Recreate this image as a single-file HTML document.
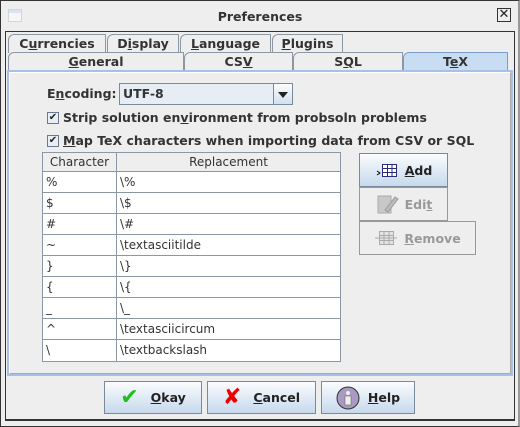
<!DOCTYPE html>
<html><head><meta charset="utf-8"><style>
*{box-sizing:border-box;margin:0;padding:0}
body{width:520px;height:427px;background:#eeeeee;font-family:"DejaVu Sans","Liberation Sans",sans-serif;font-size:12px;color:#222;position:relative;overflow:hidden}
.a{position:absolute}
.b{font-weight:bold;font-size:12.5px;color:#333}
.tab{position:absolute;border:1px solid #8c97a3;border-bottom:none;background:#eeeeee;font-weight:bold;font-size:12.5px;text-align:center;line-height:17px;color:#333;border-radius:6px 0 0 0}
u{text-decoration:underline}
.cell{position:absolute;height:21px;line-height:20px;padding-left:3px;font-size:12px;color:#333;font-family:"DejaVu Sans","Liberation Sans",sans-serif}
.btn{position:absolute;border:1px solid #7a8a99;background:linear-gradient(#fbfcfe,#c6d9ec);font-weight:bold;font-size:12.5px;display:flex;align-items:center;justify-content:center;color:#222}
</style></head><body>
<div class="a" style="left:0;top:0;width:520px;height:427px;border:1px solid #333;border-right:2px solid #999"></div>
<div class="a" style="left:8px;top:9px;width:14px;height:13px;background:linear-gradient(#dde3ea 0 3px,#f4f6f8 3px);border:1px solid #cfd6de"></div>
<div class="a b" style="left:0;top:9px;width:520px;text-align:center">Preferences</div>
<div class="a" style="left:497px;top:8px;width:14px;height:14px;border:1px solid #333;font-size:13px;line-height:11px;text-align:center">✕</div>
<div class="a" style="left:5px;top:31px;width:510px;height:390px;border:1px solid #333;border-bottom:2px solid #333"></div>
<div class="tab" style="left:8px;top:34px;width:98px;height:19px">C<u>u</u>rrencies</div>
<div class="tab" style="left:107px;top:34px;width:72px;height:19px">D<u>i</u>splay</div>
<div class="tab" style="left:180px;top:34px;width:91px;height:19px"><u>L</u>anguage</div>
<div class="tab" style="left:272px;top:34px;width:71px;height:19px"><u>P</u>lugins</div>
<div class="tab" style="left:8px;top:52px;width:176px;height:19px"><u>G</u>eneral</div>
<div class="tab" style="left:184px;top:52px;width:109px;height:19px">CS<u>V</u></div>
<div class="tab" style="left:293px;top:52px;width:110px;height:19px">S<u>Q</u>L</div>
<div class="tab" style="left:403px;top:52px;width:105px;height:20px;background:#c8ddf2;border-color:#7b9bd0">T<u>e</u>X</div>
<div class="a" style="left:7px;top:70px;width:506px;height:306px;border:2px solid #a8c0e6"></div>
<div class="a" style="left:9px;top:72px;width:502px;height:302px;border:1px solid #fff;border-right-color:#aaa;border-bottom-color:#aaa"></div>
<div class="a b" style="left:47px;top:86px">E<u>n</u>coding:</div>
<div class="a" style="left:119px;top:83px;width:174px;height:22px;border:1px solid #7a8a99;background:#e6edf5"></div>
<div class="a b" style="left:123px;top:86px">UTF-8</div>
<div class="a" style="left:273px;top:84px;width:19px;height:20px;border-left:1px solid #7a8a99;background:linear-gradient(#fbfcfe,#d2e0ee)"></div>
<div class="a" style="left:278px;top:92px;width:0;height:0;border-left:5px solid transparent;border-right:5px solid transparent;border-top:6px solid #222"></div>
<div class="a" style="left:47px;top:112px;width:12px;height:12px;border:1px solid #6a7a8a;background:#e8eef5;font-size:10px;line-height:10px;text-align:center">✔</div>
<div class="a b" style="left:63px;top:110px">Strip solution en<u>v</u>ironment from probsoln problems</div>
<div class="a" style="left:47px;top:135px;width:12px;height:12px;border:1px solid #6a7a8a;background:#e8eef5;font-size:10px;line-height:10px;text-align:center">✔</div>
<div class="a b" style="left:63px;top:133px"><u>M</u>ap TeX characters when importing data from CSV or SQL</div>
<div class="a" style="left:42px;top:152px;width:299px;height:210px;border:1px solid #8c97a3;background:#fff"></div>
<div class="a" style="left:43px;top:153px;width:297px;height:19px;background:#eeeeee;border-bottom:1px solid #8c97a3"></div>
<div class="a" style="left:43px;top:153px;width:73px;height:19px;text-align:center;line-height:18px;font-size:12px;color:#333">Character</div>
<div class="a" style="left:116px;top:153px;width:1px;height:208px;background:#8c97a3"></div>
<div class="a" style="left:117px;top:153px;width:223px;text-align:center;line-height:18px;font-size:12px;color:#333">Replacement</div>
<div id="rows"></div>
<div class="btn" style="left:359px;top:153px;width:89px;height:34px"><svg width="24" height="16" style="margin-right:6px"><path d="M2 9l3 2-3 2" stroke="#000" fill="none"/><rect x="7.5" y="2.5" width="14" height="12" fill="#fff" stroke="#2a2a80"/><path d="M7.5 6.5h14M7.5 10.5h14M12.5 2.5v12M17 2.5v12" stroke="#2a2a80"/></svg><u>A</u>dd</div>
<div class="btn" style="left:359px;top:187px;width:89px;height:34px;background:#eeeeee;border-color:#999;color:#999"><svg width="24" height="22" style="margin-right:6px"><rect x="3" y="3" width="13" height="17" fill="#c8c8c8" stroke="#aaa"/><path d="M10 17l10-13 3 2-10 13z" fill="#bbb" stroke="#999"/></svg>Edi<u>t</u></div>
<div class="btn" style="left:359px;top:221px;width:117px;height:34px;background:#eeeeee;border-color:#999;color:#999"><svg width="24" height="18" style="margin-right:6px"><rect x="5.5" y="2.5" width="14" height="13" fill="#e4e4e4" stroke="#aaa"/><path d="M5.5 6.5h14M5.5 11.5h14M10 2.5v13M15 2.5v13M1 9h22" stroke="#aaa"/></svg><u>R</u>emove</div>
<div class="btn" style="left:104px;top:381px;width:98px;height:33px"><span style="color:#1ec01e;font-size:22px;margin-right:12px">✔</span><u>O</u>kay</div>
<div class="btn" style="left:207px;top:381px;width:109px;height:33px"><span style="color:#e00;font-size:22px;font-weight:bold;margin-right:12px">✘</span><u>C</u>ancel</div>
<div class="btn" style="left:321px;top:381px;width:94px;height:33px"><svg width="24" height="24" style="margin-right:8px"><circle cx="12" cy="12" r="11" fill="#a89ac0" stroke="#333"/><circle cx="12" cy="7" r="2" fill="#eee"/><rect x="9" y="10" width="6" height="9" fill="#eee" stroke="#555" stroke-width=".5"/></svg><u>H</u>elp</div>
<script>
var d=[["%","\\%"],["$","\\$"],["#","\\#"],["~","\\textasciitilde"],["}","\\}"],["{","\\{"],["_","\\_"],["^","\\textasciicircum"],["\\","\\textbackslash"]];
var h="";d.forEach(function(r,i){var t=172+i*21;
h+='<div class="cell" style="left:43px;top:'+t+'px">'+r[0]+'</div>';
h+='<div class="cell" style="left:117px;top:'+t+'px">'+r[1]+'</div>';
if(i<8)h+='<div class="a" style="left:43px;top:'+(t+20)+'px;width:297px;height:1px;background:#8c97a3"></div>';});
document.getElementById("rows").innerHTML=h;
</script>
</body></html>
